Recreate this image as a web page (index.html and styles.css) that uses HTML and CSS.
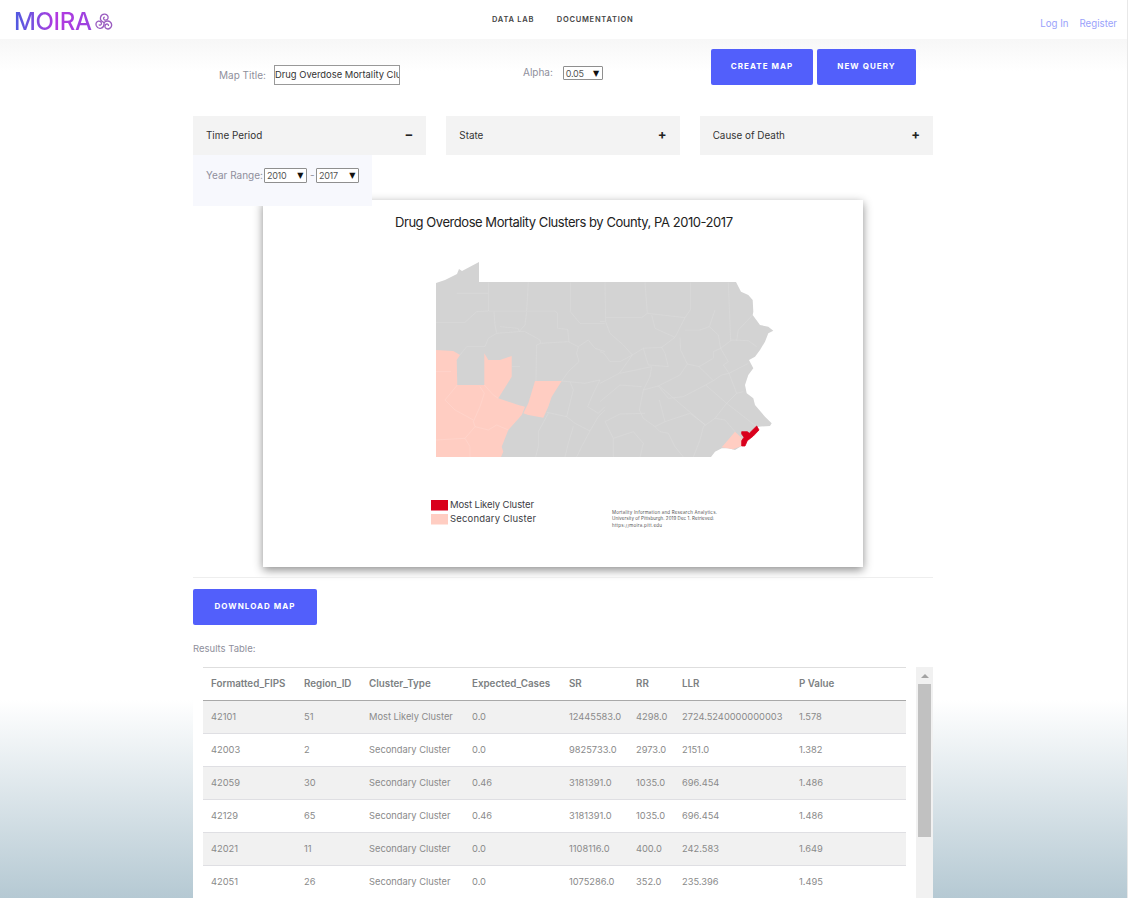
FILE: index.html
```html
<!DOCTYPE html>
<html lang="en">
<head>
  <meta charset="UTF-8" />
  <meta name="viewport" content="width=device-width, initial-scale=1.0" />
  <title>MOIRA - Data Lab</title>
  <link rel="stylesheet" href="styles.css">
</head>
<body>
  <header class="topbar">
    <a class="logo" href="#">
      <span class="logo-text">MOIRA</span>
      <svg class="logo-mark" viewBox="0 0 18 17" fill="none" stroke-width="1.300" stroke-linecap="round">
        <g stroke="#9a5cc0">
          <path d="M9 9.500C6.500 8.500 5 6.500 5.500 4.300 6 2.200 8 1 10 1.200 12.300 1.500 13.500 3.500 13 5.300 12.500 7 10.500 7.500 9.300 6.700 8.300 6 8.300 4.600 9.300 4.200" />
          <path d="M9 9.500C6.500 8.500 5 6.500 5.500 4.300 6 2.200 8 1 10 1.200 12.300 1.500 13.500 3.500 13 5.300 12.500 7 10.500 7.500 9.300 6.700 8.300 6 8.300 4.600 9.300 4.200" transform="rotate(120 9 9.500)" />
          <path d="M9 9.500C6.500 8.500 5 6.500 5.500 4.300 6 2.200 8 1 10 1.200 12.300 1.500 13.500 3.500 13 5.300 12.500 7 10.500 7.500 9.300 6.700 8.300 6 8.300 4.600 9.300 4.200" transform="rotate(240 9 9.500)" />
        </g>
      </svg>
    </a>
    <nav class="main-nav">
      <a href="#">DATA LAB</a>
      <a href="#">DOCUMENTATION</a>
    </nav>
    <div class="auth-links">
      <a href="#">Log In</a>
      <a href="#">Register</a>
    </div>
  </header>

  <main class="content">
    <form class="query-form">
      <div class="field field-title">
        <label for="mapTitle">Map Title:</label>
        <input type="text" id="mapTitle" value="Drug Overdose Mortality Clusters by County, PA 2010-2017" />
      </div>
      <div class="field field-alpha">
        <span class="field-label">Alpha:</span>
        <span class="select select-alpha">0.05<i class="caret">▼</i></span>
      </div>
      <div class="form-buttons">
        <button type="button" class="btn btn-create">CREATE MAP</button>
        <button type="button" class="btn btn-query">NEW QUERY</button>
      </div>
    </form>

    <div class="accordions">
      <div class="accordion">Time Period<span class="toggle">−</span></div>
      <div class="accordion">State<span class="toggle">+</span></div>
      <div class="accordion">Cause of Death<span class="toggle">+</span></div>
    </div>

    <div class="year-panel">
      <span class="field-label year-label">Year Range:</span>
      <span class="select select-year">2010<i class="caret">▼</i></span>
      <span class="dash">-</span>
      <span class="select select-year">2017<i class="caret">▼</i></span>
    </div>

    <div class="map-card">
      <svg class="map" viewBox="263 200 600 367">
        <text class="map-title" x="564" y="227" text-anchor="middle" textLength="338">Drug Overdose Mortality Clusters by County, PA 2010-2017</text>

        <path class="state" d="M436 283 445 280 457 274 459 269 462 271 479 262V282H736L741 291.700 748.300 295 752.700 300 753.300 311.700 752.700 315 760 325 768.300 326.700 773.300 330.700 768.300 333.300 765 341.700 760 350 755 356.700 749 360 753.300 368.300 748.300 375 745 385 746.700 393.300 753.300 398.300 755 405 765 416.700 771.700 423.300 770 426 758 426.700 743.300 445 735 450 728.300 448.300 721.700 448.300 715 451.700 711 457H436Z" />

        <!-- west half, traced at 3x -->
        <g transform="translate(425 250) scale(.3333)" class="county-lines">
          <path d="M190 97V183H305L310 97M305 183H390L398 190V235L428 238 432 275M436 97V185L465 220H540M33 217H120L155 185 190 183M207 185 210 225 215 250 190 265 180 290H125L105 315M95 130H190M225 230 280 235 282 245 300 225 305 185M215 250 280 245H300L345 270 347 280 335 285 333 393M347 280 430 275 460 290 490 270 510 295 540 305M460 290 455 310 462 335 430 365 410 393M410 393 480 400 525 390 505 430 488 470 520 490 540 470M435 395 445 420 425 500 365 487M425 500 450 520 495 543 520 500 540 480M495 543 470 590 455 621M445 530 430 580 420 621M370 490 340 545V590L332 621M260 350H285" />
        </g>
        <!-- east half -->
        <g transform="translate(600 250) scale(.3333)" class="county-lines">
          <path d="M15 97 17 215M135 97 142 190 255 203 272 178V97M17 203H125L142 190M0 215H15M17 215 30 250 70 285 97 315 60 335H30L10 308 0 305M97 315 130 295 185 292 225 262 165 235 155 195M225 262 255 203M255 240H300L328 230 345 180M328 230 355 255 362 295 395 270 445 272 470 290M385 97 392 272M458 195 415 240 410 272M240 262 242 300 262 342 297 350 340 325V305L362 295 385 335 370 345 387 370 445 340M262 342 240 375 175 408 130 420M297 350 340 392 317 405 250 440 205 445 175 408M340 392 365 375 387 370 410 430 380 460 317 405M410 430 430 425M380 460 470 530M380 460 345 505 310 530 300 570 280 621M345 505 375 510 405 545M178 450 195 515 270 490 317 525M195 515 165 530 130 505 118 480 130 420M178 408 315 525M60 370 155 350 150 380 130 420M97 315 58 370 0 400M130 295 145 345 205 350 195 310 185 292M0 455 60 405 125 410M15 515 60 492 135 490M40 565V621M40 565 100 545 130 580 120 621M15 515 40 565M165 530 180 545 205 550 225 590 250 621" />
        </g>

        <path class="secondary" d="M436 350 453.300 351 460 355 456.700 360 457.300 385H484.300V353.300L488.300 360H500L511.700 356V376.700L498.300 398.300 518.300 405 525 406.700 521.700 415 508.300 430 501.700 446.700 503.300 451.700 501 457H436Z" />
        <path class="secondary" d="M535 381H561.700L551.700 396.700 548.300 406.700 543.300 417.700 528.300 415 523.300 413.300 528.300 403.300Z" />
        <path class="secondary" d="M735 431.700 741.700 438V446L733 449.300 721.700 447.300 728 440Z" />
        <g transform="translate(425 250) scale(.3333)" class="cluster-lines">
          <path d="M33 365H78M97 405 60 450 90 480 145 510M165 410 178 430 165 470 145 515M178 405 205 435 220 445M145 515 150 530 120 565 33 570M150 530 190 540 215 525 250 540M120 565 135 590V621" />
        </g>
        <path class="primary cluster-shape" d="M741.700 431.700H747.300L749.300 433.300 756.700 426 759 430 753.300 436 747.300 440.700 745 446H741.700V440.700L744 437.300 741.700 434Z" />

        <rect class="primary" x="431" y="500" width="17" height="10.500" />
        <rect class="secondary" x="431" y="514" width="17" height="10.500" />
        <text class="legend" x="450" y="508" textLength="84">Most Likely Cluster</text>
        <text class="legend" x="450" y="522" textLength="86">Secondary Cluster</text>
        <text class="credit" x="612" y="513.500" textLength="105">Mortality Information and Research Analytics.</text>
        <text class="credit" x="612" y="520" textLength="102">University of Pittsburgh. 2019 Dec 1. Retrieved:</text>
        <text class="credit" x="612" y="526.500" textLength="50">https://moira.pitt.edu</text>
      </svg>
    </div>

    <hr class="divider" />

    <button type="button" class="btn btn-download">DOWNLOAD MAP</button>

    <p class="results-label">Results Table:</p>

    <div class="results">
      <table class="results-table">
        <colgroup>
          <col class="c-fips"><col class="c-region"><col class="c-type"><col class="c-expected">
          <col class="c-sr"><col class="c-rr"><col class="c-llr"><col class="c-p">
        </colgroup>
        <thead>
          <tr>
            <th>Formatted_FIPS</th><th>Region_ID</th><th>Cluster_Type</th><th>Expected_Cases</th>
            <th>SR</th><th>RR</th><th>LLR</th><th>P Value</th>
          </tr>
        </thead>
        <tbody>
          <tr><td>42101</td><td>51</td><td>Most Likely Cluster</td><td>0.0</td><td>12445583.0</td><td>4298.0</td><td>2724.5240000000003</td><td>1.578</td></tr>
          <tr><td>42003</td><td>2</td><td>Secondary Cluster</td><td>0.0</td><td>9825733.0</td><td>2973.0</td><td>2151.0</td><td>1.382</td></tr>
          <tr><td>42059</td><td>30</td><td>Secondary Cluster</td><td>0.46</td><td>3181391.0</td><td>1035.0</td><td>696.454</td><td>1.486</td></tr>
          <tr><td>42129</td><td>65</td><td>Secondary Cluster</td><td>0.46</td><td>3181391.0</td><td>1035.0</td><td>696.454</td><td>1.486</td></tr>
          <tr><td>42021</td><td>11</td><td>Secondary Cluster</td><td>0.0</td><td>1108116.0</td><td>400.0</td><td>242.583</td><td>1.649</td></tr>
          <tr><td>42051</td><td>26</td><td>Secondary Cluster</td><td>0.0</td><td>1075286.0</td><td>352.0</td><td>235.396</td><td>1.495</td></tr>
        </tbody>
      </table>
      <div class="scrollbar">
        <span class="scroll-arrow"></span>
        <span class="scroll-thumb"></span>
      </div>
    </div>
  </main>
</body>
</html>
```

FILE: styles.css
```css
:root {
  --accent: #525ffb;
  --label: #8f8f9c;
  --font: Inter, "Noto Sans", Arial, sans-serif;
}
html, body {
  height: 898px;
  overflow: hidden;
}
body {
  font-family: var(--font);
  margin: 0;
  padding: 0;
  color: #333;
  border-right: 1px solid #e8e8e8;
  background:
    linear-gradient(#f7f7f7, #fff) no-repeat 0 39px / 100% 32px,
    linear-gradient(#fff 0, #fff 700px, #b5c9d3 898px);
}
a {
  text-decoration: none;
  color: inherit;
}

/* header */
.topbar {
  display: flex;
  height: 39px;
  background: #fff;
  padding: 0 10px 0 14px;
}
.logo {
  display: flex;
  align-items: flex-start;
  width: 478px;
  padding-top: 7px;
}
.logo-text {
  font-size: 24px;
  line-height: 29px;
  font-weight: 500;
  letter-spacing: -0.35px;
  background: linear-gradient(90deg, #4d5ae0 0%, #7a4fe0 25%, #b338e0 55%, #9a44e0 100%);
  -webkit-background-clip: text;
  background-clip: text;
  color: transparent;
}
.logo-mark {
  width: 18px;
  height: 17px;
  margin: 6px 0 0 3px;
}
.main-nav {
  display: flex;
  gap: 22.500px;
  padding-top: 14px;
  font-size: 7.5px;
  line-height: 11px;
  font-weight: 600;
  letter-spacing: 0.75px;
  color: #444;
}
.auth-links {
  display: flex;
  gap: 11px;
  margin-left: auto;
  padding-top: 18px;
  font-size: 9.700px;
  line-height: 12px;
  color: #9aa2fb;
}

/* form */
.content {
  width: 740px;
  height: 859px;
  margin-left: 193px;
  background: linear-gradient(#f7f7f7, #fff 32px);
}
.query-form {
  display: grid;
  grid-template-columns: 330px 188px auto;
  padding-top: 10px;
}
.field {
  display: flex;
  align-items: center;
  font-size: 10px;
  color: var(--label);
}
.field-title {
  padding: 16px 0 0 26px;
  height: 20px;
  gap: 12px;
}
.field-title label {
  width: 43px;
  margin-top: -1px;
  white-space: nowrap;
}
.field-title input {
  width: 126px;
  height: 20px;
  box-sizing: border-box;
  padding: 0 0 1px 0;
  border: 1px solid #999;
  font-family: var(--font);
  font-size: 9.400px;
  color: #333;
  background: #fff;
  outline: none;
}
.field-alpha {
  gap: 10px;
  height: 14px;
  padding-top: 17px;
}
.field-alpha .field-label {
  margin-top: -2px;
}
.field-label {
  white-space: nowrap;
}
.select {
  display: inline-flex;
  align-items: center;
  justify-content: space-between;
  flex: none;
  box-sizing: border-box;
  border: 1px solid #8f8f8f;
  border-radius: 1px;
  padding: 0 3px 0 2px;
  font-size: 9px;
  letter-spacing: -0.3px;
  color: #555;
  background: #fff;
}
.select-alpha {
  width: 40px;
  height: 14px;
}
.select-year {
  width: 43px;
  height: 15px;
}
.year-label {
  width: 56px;
  margin-right: -1px;
}
.caret {
  font-family: "DejaVu Sans", sans-serif;
  font-style: normal;
  font-size: 8px;
  color: #111;
}
.form-buttons {
  display: flex;
  gap: 4px;
}
.btn {
  height: 36px;
  border: none;
  border-radius: 2px;
  background: var(--accent);
  color: #fff;
  font-family: var(--font);
  font-size: 8px;
  font-weight: 700;
  letter-spacing: 1.05px;
  padding: 0 0 2px;
  cursor: pointer;
}
.btn-create {
  width: 102px;
}
.btn-query {
  width: 99px;
}
.btn-download {
  display: block;
  width: 124px;
  margin-top: 11px;
}

/* filters */
.accordions {
  display: grid;
  grid-template-columns: repeat(3, 1fr);
  gap: 20px;
  margin-top: 31px;
}
.accordion {
  display: flex;
  align-items: center;
  justify-content: space-between;
  height: 39px;
  padding: 0 13px 2px;
  box-sizing: border-box;
  background: #f3f3f3;
  font-size: 9.900px;
  color: #333;
}
.toggle {
  font-size: 13px;
  line-height: 13px;
  font-weight: 700;
  color: #222;
}
.year-panel {
  position: relative;
  z-index: 1;
  display: flex;
  align-items: flex-start;
  gap: 3px;
  box-sizing: border-box;
  width: 179px;
  height: 51px;
  padding: 13px 0 0 13px;
  background: #f7f8fd;
  font-size: 10px;
  line-height: 15px;
  color: var(--label);
}
.year-panel .dash {
  width: 2px;
  margin: 0 1px 0 0;
}

/* map */
.map-card {
  width: 600px;
  height: 367px;
  margin: -6px 0 0 70px;
  background: #fff;
  box-shadow: 0 3px 9px rgba(0, 0, 0, 0.45);
}
.map {
  display: block;
  width: 600px;
  height: 367px;
  font-family: var(--font);
}
.map-title {
  font-size: 13px;
  fill: #222;
}
.state {
  fill: #d3d3d3;
}
.county-lines path {
  fill: none;
  stroke: #dfdfdf;
  stroke-width: 1.300;
}
.cluster-lines path {
  fill: none;
  stroke: #ffdcd4;
  stroke-width: 1.300;
}
.primary {
  fill: #d9001c;
}
.cluster-shape {
  stroke: #d9001c;
  stroke-width: 0.8;
}
.secondary {
  fill: #ffcdc2;
}
.legend {
  font-size: 9.500px;
  fill: #3c3c44;
}
.credit {
  font-size: 4.500px;
  fill: #555;
}
.divider {
  height: 1px;
  margin: 10px 0 0;
  border: none;
  background: #eeeeee;
}

/* results */
.results-label {
  margin: 17px 0 0;
  font-size: 9.500px;
  line-height: 13px;
  color: var(--label);
}
.results {
  display: flex;
  align-items: flex-start;
  gap: 10px;
  height: 231px;
  margin: 12px 0 0 10px;
  overflow: hidden;
}
.results-table {
  width: 703px;
  table-layout: fixed;
  border-collapse: collapse;
  font-size: 9.300px;
  color: #8a8a8a;
}
.c-fips { width: 93px; }
.c-region { width: 65px; }
.c-type { width: 103px; }
.c-expected { width: 97px; }
.c-sr { width: 67px; }
.c-rr { width: 46px; }
.c-llr { width: 117px; }
.c-p { width: 115px; }
.results-table th {
  height: 33px;
  padding: 0 8px 2px;
  box-sizing: border-box;
  text-align: left;
  font-size: 9.800px;
  font-weight: 600;
  color: #7c7f82;
  white-space: nowrap;
  border-top: 1px solid #dedede;
  border-bottom: 1px solid #a9a9a9;
  background: #fff;
}
.results-table td {
  height: 33px;
  padding: 0 8px 2px;
  box-sizing: border-box;
  white-space: nowrap;
  border-bottom: 1px solid #dfdfe3;
}
.results-table tbody tr:nth-child(odd) {
  background: #f1f1f1;
}
.results-table tbody tr:nth-child(even) {
  background: #fff;
}
.scrollbar {
  display: flex;
  flex-direction: column;
  align-items: center;
  flex: none;
  width: 17px;
  height: 231px;
  background: #f1f1f1;
}
.scroll-arrow {
  width: 0;
  height: 0;
  margin: 7px 0 6px;
  border-left: 4px solid transparent;
  border-right: 4px solid transparent;
  border-bottom: 4px solid #a3a3a3;
}
.scroll-thumb {
  width: 13px;
  height: 153px;
  background: #c1c1c1;
}
```
